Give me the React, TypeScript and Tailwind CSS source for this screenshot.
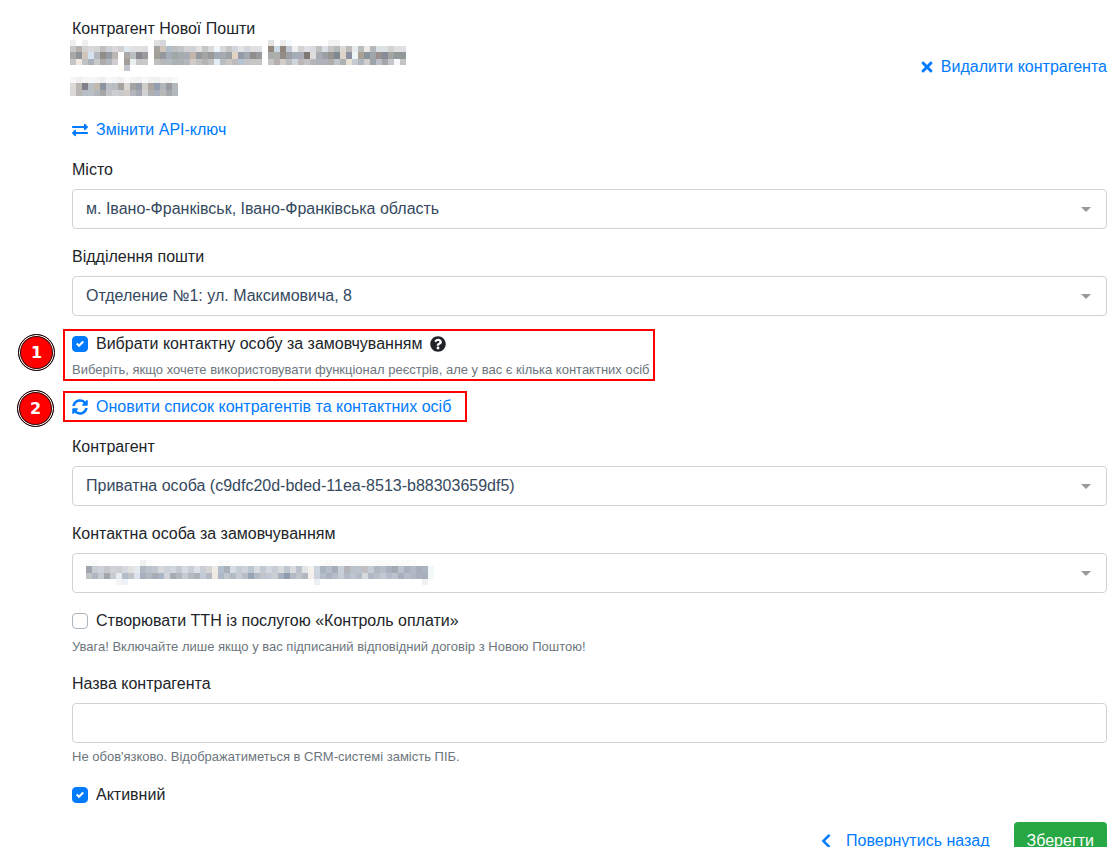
import { useState, type ReactNode } from "react";
import { FaChevronLeft, FaExchangeAlt, FaQuestionCircle, FaSyncAlt, FaTimes } from "react-icons/fa";

interface MosaicProps {
  label: string;
  rows: { y: number; h: number; cells: string }[];
  width: number;
  height: number;
  className?: string;
}

// Personal data is hidden behind a mosaic, "-" is an empty cell
function Mosaic({ label, rows, width, height, className }: MosaicProps) {
  return (
    <svg
      role="img"
      aria-label={label}
      width={width}
      height={height}
      shapeRendering="crispEdges"
      className={className}
    >
      {rows.map((row) =>
        row.cells
          .trim()
          .split(/\s+/)
          .map((color, i) =>
            color === "-" ? null : (
              <rect key={`${row.y}-${i}`} x={i * 6} y={row.y} width={6} height={row.h} fill={`#${color}`} />
            ),
          ),
      )}
    </svg>
  );
}

const nameRows = [
  { y: 0, h: 6, cells: "eee - eee - - - - - - - - - - - e0e0e0 d6d7dc - - - - - - - - - - - - - - - - - e2e2e2 - ececec f3f9fd - - - - - - f1f1f1 f1f1f1" },
  { y: 6, h: 6, cells: "c8c8c8 b6afae d4d2d0 d9d9d9 d5d5d5 c0c0c0 cdd0d4 d8d8dc d0d0d0 e0e9f0 e0e0e0 e0e0e0 dedede - a6a29e cfc5b8 b2bdca bebebe c3c6c9 d2d2d2 cfd3d8 e1e1e1 c6c6c6 dadada eff6fb d8d8d8 c6c6c6 d2d6dc e4e4e4 d3d6dc e0e0e0 e0e0e0 - 93897f cbd9e4 91867b c1c9d4 f0f0f0 d4d4d4 e0e1e6 dadade c0c0c0 dbe0e8 c5c5c3 b5bbbb dcd8d5 bcbcbc e6ebed bcbebe eceae6 b3b8bb dce1e4 dce1e4 d2d2d2 e0e0e0 e0e0e0" },
  { y: 12, h: 7, cells: "a8a8a8 909398 d0c6bb d3e2ef b3b6bc 908d8b 979ba4 bab6b1 - a9a9aa bcbfc0 888891 979b9f - a29f9a 95989d a4adb8 a0a5a6 a5acaf a9acb5 c3b4ac 9499a0 a3a4a4 999998 a0a9b4 a7abb1 9ea2a5 e1d2c4 939ba8 a3a8b1 8f8c8d 979b9e - a9aeac acaeab 928c86 9da1a7 a1aeb5 a9acb6 7f7975 dddddd a7abb3 9ca0a5 989490 7f8890 e1d4c9 8b91a1 edf4f5 aaa196 89949d a0a4ab 968f8e 858c98 a3a3a2 92979a 92979a" },
  { y: 19, h: 6, cells: "c5c5c5 efe8e1 c2c2c4 acb0b8 c7c8c8 aeaaad b1b5bd d0cccf - a39d9a e8f0f0 c8c8c8 c8c8c8 - c0c0c0 b5b7b9 b3babd abb2b4 aeb2b5 b3b8bb d2cbc7 bec0c2 b4b4b4 c0bfc2 e1edf5 b9bdc1 c9c5c2 bdbbbb b6c4d2 c3c3c5 c6c6c6 c6c6c6 - c4c4c3 b6afab d2cdc9 b9bdbf ced6db bcb7b6 c3c2c4 b6b6b8 afb0b8 aeb2b8 afaead c1c4c8 aeb1b4 eadfd5 c5c9d1 b0b6bd d0cdca 9ca4ab bcc0c6 a5a6aa c5c6c9 f8f8f8 c4c4c4" },
  { y: 25, h: 6, cells: "- - - - - - - - fffcf6 c1c4cc" },
];

const phoneRows = [
  { y: 0, h: 6, cells: "f7f7f7 f0f0f0 f5f5f5 f7f7f7 f4f4f4 eeeeee f8f8f8 f5f5f5 f0f0f0 fafafa f5f5f5 f3f3f3 f8f8f8 f1f1f1 f0f0f0 f6f6f6 f3f3f3 fafafa" },
  { y: 6, h: 7, cells: "dcdad6 bab6b3 817f8a b9c0c5 c1b8ae 8b92a0 bcc0c4 b9bec2 a7a39f d9d8d5 a5a2a4 979ca7 d0ceca ada59f 929eae b0b4bb 9a9a9e b2b8bb" },
  { y: 13, h: 6, cells: "dad9d5 b9b7b3 b9bdc5 b9c0c5 b2b5bb a6a6a8 c0c4c7 cccdd0 c9cacc d0ccc7 b3b6bd a5a8b0 d2d2d2 b0afb2 a9b0bb b9b8b8 a5a8ae b2b8bb" },
];

const contactRows = [
  { y: 0, h: 6, cells: "fbfbfb fbfbfb - - - - - - - f0f0f0 f8fafc - - - - - - - - - - - fafafa fafafa - - - - - - - - - - - - - - - fbfbfb f9f9f9 fbfbfb fbfbfb fbfbfb fbfbfb fbfbfb fbfbfb fbfbfb fbfbfb fbfbfb fbfbfb fbfbfb fbfbfb fbfbfb fbfbfb" },
  { y: 6, h: 7, cells: "a0a4ac c8ccd3 ced1d7 c5c7cc cfd3d9 ccd0d5 d5d9df e0e2e1 e5e9ed b0b8c2 bac2cb c2c7cf d6d9de cbd0d9 d1d6dd c5cad1 d7dbdf c9ced5 dce0e5 c9ced6 d6d5d5 f0ebe4 b2bfce a8b0bc d7dce2 c4ccd4 ced3d9 bcc6d1 d9dcde c3c9d2 d2d7dd c8cdd5 d7dcda bec6d0 d9dcde b9c2cc e2e4e6 f5f1ed ccd4dd a9b2c0 b4bdc7 a5adb8 c6cfd7 b1b3b8 b9c1cc bbc3cb c1bfc1 c4ccd6 afb7c2 b5bdc8 a9b1bd a4a8b0 bac2cb a9b1be b1bac4 a7afba abb4bf f2f7fa" },
  { y: 13, h: 6, cells: "c3c3c5 b1b7c0 c4cbd3 a3a6ad c6cacf e7ebee b3bdc9 c2c4c7 dbe3ed a9b0bc b2b7bf a8acb5 a9b5c5 d1d4d8 a6acb5 b2b7bf c5cbd2 b5b9c0 adb2ba c2cbd5 b5b9c1 f0e9e2 adb8c6 c1c6cd b2bac5 c8ccd2 b6bdc6 98a3b4 b2bac5 c0c3c9 bfc8d3 c9cdd4 a7b1bf 8e9caf b5bbc5 c0c4ca b2b8c0 f4efec ccd3dd b3bcc7 aab2bd b5bec9 c5ced5 b2bac6 bcc4cd b3bbc8 d6dadd afb8c4 b9bfc7 c1cad2 b5bcc8 bbc4cc a8b0bc b5bdc7 b0b7c1 a8b1bd a6afbb f2f7fa" },
  { y: 19, h: 6, cells: "- - - - - f4f4f4 eef3f7 - - - - - - - - - - - - - - - - - - - - - - - - - - - - - - - eeeff2 - - - - - - - - - - - - - - - - - f0f0f2" },
];

function Field({ id, label, children, hint }: { id: string; label: string; children: ReactNode; hint?: string }) {
  return (
    <div className="mb-4">
      <label htmlFor={id} className="mb-[7px] block">
        {label}
      </label>
      {children}
      {hint && <Hint>{hint}</Hint>}
    </div>
  );
}

function Hint({ children }: { children: ReactNode }) {
  return <p className="mt-1 text-[13px] leading-5 text-[#6c757d]">{children}</p>;
}

function Select({ id, value, children }: { id: string; value: string; children?: ReactNode }) {
  return (
    <div className="relative">
      <select
        id={id}
        className="block h-10 w-full appearance-none rounded border border-[#ced4da] bg-white pr-10 pl-[13px] text-[#35495e] outline-none focus:border-[#80bdff]"
      >
        <option>{value}</option>
      </select>
      {children}
      <svg
        width="10"
        height="5"
        viewBox="0 0 10 5"
        className="pointer-events-none absolute top-[18px] right-4 fill-[#999]"
      >
        <path d="M0 0h10L5 5z" />
      </svg>
    </div>
  );
}

function Checkbox({ label, defaultChecked = false }: { label: string; defaultChecked?: boolean }) {
  const [checked, setChecked] = useState(defaultChecked);
  return (
    <label className="flex items-center gap-2">
      <span className="relative size-4">
        <input
          type="checkbox"
          checked={checked}
          onChange={(e) => setChecked(e.target.checked)}
          className="block size-4 appearance-none rounded border border-[#adb5bd] bg-white checked:border-[#007bff] checked:bg-[#007bff]"
        />
        {checked && (
          <svg viewBox="0 0 8 8" className="pointer-events-none absolute top-1 left-1 size-2 fill-white">
            <path d="M6.564.75l-3.59 3.612-1.538-1.55L0 4.26 2.974 7.25 8 2.193z" />
          </svg>
        )}
      </span>
      {label}
    </label>
  );
}

function Marker({ children, className }: { children: ReactNode; className: string }) {
  return (
    <span
      className={`absolute flex size-[37px] items-center justify-center rounded-full border border-black bg-[#f00] font-['DejaVu_Sans',sans-serif] font-bold text-white shadow-[inset_0_0_0_1px_#fff,inset_0_0_0_2px_#300] ${className}`}
    >
      {children}
    </span>
  );
}

const linkClass = "flex w-fit items-center text-[#007bff] hover:underline";

export default function App() {
  return (
    <main className="bg-white pt-[17px] pr-[7px] pl-[72px] font-['Liberation_Sans',Arial,sans-serif] text-base leading-6 text-[#212529]">
      <form onSubmit={(e) => e.preventDefault()}>
        <div className="flex items-center justify-between">
          <div>
            <p className="-mb-px">Контрагент Нової Пошти</p>
            <Mosaic label="ПІБ" rows={nameRows} width={336} height={31} className="-ml-0.5 block" />
            <Mosaic label="Телефон" rows={phoneRows} width={108} height={19} className="mt-1.5 -ml-0.5 block" />
          </div>
          <a href="#delete" className={`mt-5 gap-2 ${linkClass}`}>
            <FaTimes className="h-4 w-3" />
            Видалити контрагента
          </a>
        </div>

        <a href="#api-key" className={`mt-[22px] mb-4 gap-2 ${linkClass}`}>
          <FaExchangeAlt size={16} />
          Змінити API-ключ
        </a>

        <Field id="city" label="Місто">
          <Select id="city" value="м. Івано-Франківськ, Івано-Франківська область" />
        </Field>
        <Field id="office" label="Відділення пошти">
          <Select id="office" value="Отделение №1: ул. Максимовича, 8" />
        </Field>

        <div className="relative -mt-[3px] -ml-[9px] w-fit border-2 border-[#f00] pt-px pr-[3px] pl-[7px]">
          <Marker className="top-[3px] -left-[47px]">1</Marker>
          <div className="flex items-center gap-2">
            <Checkbox label="Вибрати контактну особу за замовчуванням" defaultChecked />
            <FaQuestionCircle size={16} />
          </div>
          <div className="-mb-px">
            <Hint>Виберіть, якщо хочете використовувати функціонал реєстрів, але у вас є кілька контактних осіб</Hint>
          </div>
        </div>

        <div className="relative mt-[10px] mb-[13px] -ml-[9px] w-fit border-2 border-[#f00] pt-0.5 pr-[14px] pb-px pl-[7px]">
          <Marker className="-top-[3px] -left-12">2</Marker>
          <a href="#refresh" className={`gap-2 ${linkClass}`}>
            <FaSyncAlt size={16} />
            Оновити список контрагентів та контактних осіб
          </a>
        </div>

        <Field id="counterparty" label="Контрагент">
          <Select id="counterparty" value="Приватна особа (c9dfc20d-bded-11ea-8513-b88303659df5)" />
        </Field>
        <Field id="contact" label="Контактна особа за замовчуванням">
          <Select id="contact" value="">
            <Mosaic
              label="Контактна особа"
              rows={contactRows}
              width={348}
              height={25}
              className="pointer-events-none absolute top-[7px] left-[14px]"
            />
          </Select>
        </Field>

        <div className="mb-[15px]">
          <Checkbox label="Створювати ТТН із послугою «Контроль оплати»" />
          <Hint>Увага! Включайте лише якщо у вас підписаний відповідний договір з Новою Поштою!</Hint>
        </div>

        <Field id="title" label="Назва контрагента" hint="Не обов'язково. Відображатиметься в CRM-системі замість ПІБ.">
          <input
            id="title"
            type="text"
            className="block h-10 w-full rounded border border-[#ced4da] px-[13px] outline-none focus:border-[#80bdff]"
          />
        </Field>

        <Checkbox label="Активний" defaultChecked />

        <div className="mt-[15px] flex items-center justify-end gap-6">
          <a href="#back" className={`gap-3 ${linkClass}`}>
            <FaChevronLeft size={16} />
            Повернутись назад
          </a>
          <button type="submit" className="h-[38px] rounded bg-[#28a745] px-[13px] text-white hover:bg-[#218838]">
            Зберегти
          </button>
        </div>
      </form>
    </main>
  );
}
